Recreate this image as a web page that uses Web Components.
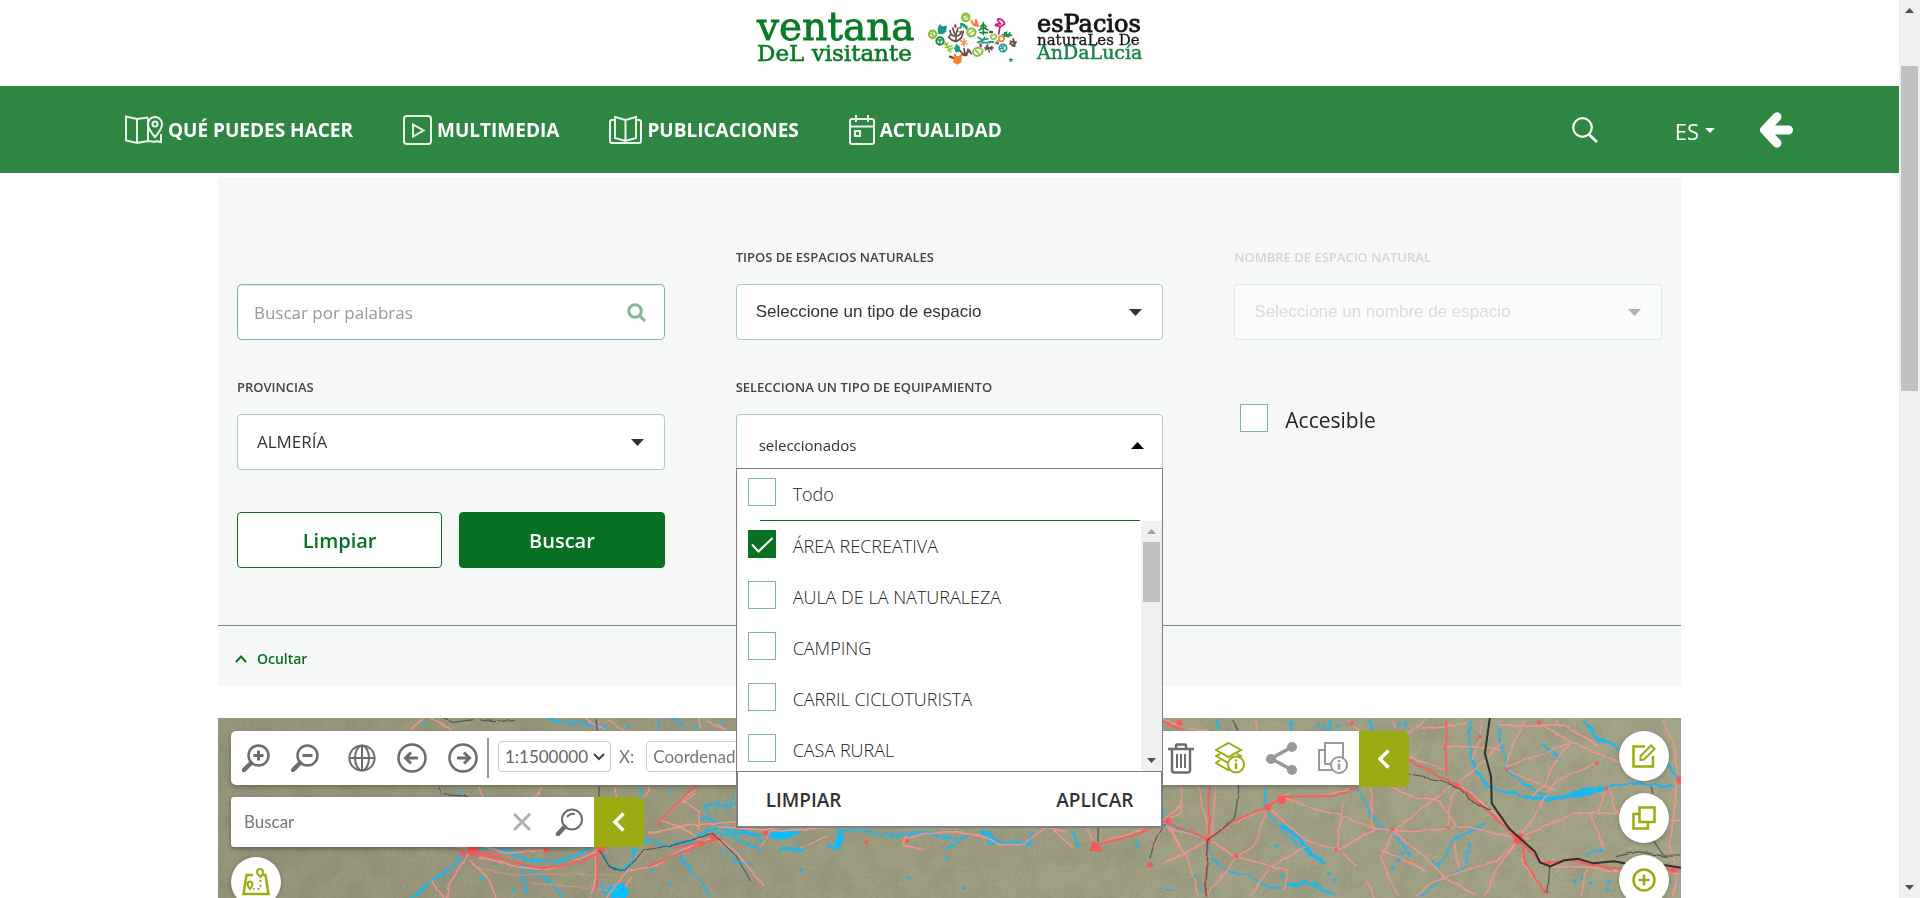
<!DOCTYPE html>
<html lang="es">
<head>
<meta charset="utf-8">
<title>Ventana del Visitante</title>
<style>
  html, body { height: 100%; }
  body { margin: 0; background: #fff; color: #333; font-family: "Open Sans", "Noto Sans", sans-serif; overflow: hidden; }
</style>
</head>
<body>
<page-shell>
  <site-logo></site-logo>
  <site-nav></site-nav>
  <search-panel></search-panel>
  <map-view></map-view>
</page-shell>

<script>
const define = (name, html, setup) => {
  const tpl = document.createElement('template');
  tpl.innerHTML = '<style>*{box-sizing:border-box}[hidden]{display:none}</style>' + html;
  customElements.define(name, class extends HTMLElement {
    connectedCallback() {
      if (this.shadowRoot) return;
      const root = this.attachShadow({ mode: 'open' });
      root.append(tpl.content.cloneNode(true));
      if (setup) setup(root, this);
    }
  });
};

/* Vertical scroll track, with a thumb placed by the --start and --size properties */
define('scroll-track', `
<style>
  :host { display: flex; flex-direction: column; align-items: center; width: 21px; background: #f0f0f0; flex: none; }
  svg { display: block; flex: none; width: 9px; height: 5px; margin: 8px 0; fill: #505050; }
  :host([at-start]) .up { fill: #a3a3a3; }
  .rail { flex: 1; width: 17px; display: flex; flex-direction: column; }
  .before { flex: none; height: var(--start, 0%); }
  .thumb { flex: none; height: var(--size, 30%); background: #c1c1c1; }
</style>
<svg class="up" viewBox="0 0 9 5"><path d="M4.500 0 9 5H0z"/></svg>
<div class="rail"><div class="before"></div><div class="thumb"></div></div>
<svg viewBox="0 0 9 5"><path d="M0 0h9L4.500 5z"/></svg>`);

define('page-shell', `
<style>
  :host { display: flex; height: 100vh; }
  main { flex: 1; min-width: 0; display: flex; flex-direction: column; overflow: hidden; }
  scroll-track { --start: 45px; --size: 38%; }
</style>
<main><slot></slot></main>
<scroll-track></scroll-track>`);

define('site-logo', `
<style>
  :host { display: flex; justify-content: center; height: 86px; flex: none; }
  a { display: block; }
  svg { display: block; font-family: "DejaVu Serif", serif; }
</style>
<a href="#" aria-label="Ventana del Visitante">
<svg width="388" height="70" viewBox="756 0 388 70">
  <g fill="#0b7a26" stroke="#0b7a26">
    <text x="757" y="40" font-size="39" stroke-width=".8">ventana</text>
    <text x="757" y="61" font-size="23" stroke-width=".6">DeL visitante</text>
  </g>
  <text x="1037" y="32" font-size="24" fill="#151515" stroke="#151515" stroke-width=".9">esPacios</text>
  <text x="1037" y="45" font-size="15" fill="#151515" stroke="#151515" stroke-width=".3">naturaLes De</text>
  <text x="1037" y="59" font-size="19" fill="#168244" stroke="#168244" stroke-width=".4">AnDaLucía</text>
  <g transform="translate(900 0) scale(.33333)" fill="none" stroke-width="7" stroke-linecap="round" stroke-linejoin="round">
    <g stroke="#8cc63f">
      <circle cx="98" cy="103" r="11"/><path d="M90 100l16 8M98 92v22" stroke-width="4"/>
      <circle cx="197" cy="52" r="11"/><path d="M190 48q7-6 12 2q-6 6-10 4" stroke-width="4"/>
      <circle cx="214" cy="97" r="12"/><path d="M206 103l18-14" stroke-width="4"/>
      <path d="M244 146q-20-8-26 10q6 16 20 10q10-6 10-16M228 152l8 8" stroke-width="6"/>
      <path d="M136 128l16 28M136 142l20-4M144 152l14-8M132 134l12-4" stroke-width="5"/>
      <path d="M272 108q10-10 18 0q-2 14-16 8z" stroke-width="5"/>
      <path d="M190 82q6-10 12-2M170 94l14 2" stroke-width="5"/>
      <path d="M286 130l8-8M232 128h10" stroke-width="5"/>
    </g>
    <g stroke="#159a8b">
      <path d="M116 84l4-8 6 6 12-2-2 14q-8 10-20 4z" fill="#159a8b" stroke-width="5"/>
      <path d="M182 72l10 2 8 12M180 84l8-12" stroke-width="6"/>
      <path d="M234 126l14-4 6-10M234 112l14 8 16-4M246 128l22 0" stroke-width="5"/>
      <path d="M170 134l8 6 0 14-10 2-4-10z" fill="#159a8b" stroke-width="3"/>
      <circle cx="309" cy="144" r="11" stroke-width="5"/><path d="M302 146l12-8M304 138l8 14" stroke-width="4"/>
      <path d="M332 175v9M328 179h10M330 184l5-3" stroke-width="4"/>
      <path d="M268 126h12" stroke-width="6"/>
    </g>
    <g stroke="#198a43">
      <circle cx="120" cy="123" r="11" stroke-width="6"/><path d="M114 120h12M118 130l4-12" stroke-width="4"/>
      <path d="M250 68v36M242 80l8-8 8 8M238 90l12-8 14 8M240 98h22" stroke-width="5"/>
      <path d="M314 98l8 12M308 104h16l10 2M320 96l-8 16M330 98l-4 12" stroke-width="5"/>
    </g>
    <g stroke="#6a4a48">
      <path d="M150 92q2 16 14 16q16 2 20-14M158 84l6 18M174 84l-6 18M168 104v20M152 104l-6 8q8 10 20 12M190 94l-6 20-14 10" stroke-width="5"/>
      <path d="M180 152l12 14M192 146l4 20M204 148l-4 18M186 164l20-8M208 150l6 12" stroke-width="5"/>
      <path d="M332 124l12 4M330 130l10 8 8-12M340 118l4 20" stroke-width="6"/>
      <path d="M258 138l18 12M256 150l20-10M262 134l6 22M254 144h26" stroke-width="4"/>
      <path d="M150 170l10 4M270 96h6" stroke-width="7"/>
    </g>
    <g stroke="#f58233">
      <path d="M164 162l4 8h10l6-6-2 22-10 6-10-6z" fill="#f58233" stroke-width="4"/>
      <path d="M214 62l6 12 14 4-6-18-2 12" stroke-width="6"/>
      <path d="M192 116v22M182 122l20 10M184 134l16-12" stroke-width="4"/>
      <circle cx="304" cy="116" r="8" stroke-width="5"/>
    </g>
    <g stroke="#d8127d">
      <path d="M302 58q-6-4-10 2l10 12q-14-2-16 4l16 4 12-8q-4-12-12-14M300 80l-4 22" stroke-width="5"/>
      <path d="M166 76v4M242 134v4M292 130h2" stroke-width="7"/>
    </g>
  </g>
</svg>
</a>`);

define('nav-item', `
<style>
  :host { display: block; }
  a { display: flex; align-items: center; gap: 5px; color: #fff; text-decoration: none; font-size: 19px; line-height: 28px; font-weight: 700; white-space: nowrap; }
  ::slotted(svg) { display: block; fill: none; stroke: #fff; stroke-width: 2; opacity: .9; }
</style>
<a href="#"><slot name="icon"></slot><slot></slot></a>`);

define('site-nav', `
<style>
  :host { display: block; background: #2d8742; flex: none; color: #fff; }
  nav { display: flex; align-items: center; height: 87px; padding: 0 106px 0 125px; gap: 50px; }
  .right { margin-left: auto; display: flex; align-items: center; }
  button { background: none; border: 0; padding: 0; color: inherit; font: inherit; display: flex; align-items: center; }
  .lang { font-size: 22px; line-height: 30px; gap: 6px; margin: 2px 44px 0 77px; }
  svg { display: block; }
</style>
<nav aria-label="Principal">
  <nav-item><svg slot="icon" width="38" height="30" viewBox="0 0 38 30"><path d="M30.500 26 36 27V19M23 2.500l-11 1.500L1 1.500v24L12 28l11-2 8 1M12 4v24M23 3v23M30 22q-7-8-7-13a7 7 0 0 1 14 0q0 5-7 13z"/><circle cx="30" cy="9" r="2.500"/></svg>QUÉ PUEDES HACER</nav-item>
  <nav-item><svg slot="icon" width="29" height="30" viewBox="0 0 29 30"><rect x="1" y="1" width="27" height="28" rx="3"/><path d="M10 9.500v12l10.500-6z"/></svg>MULTIMEDIA</nav-item>
  <nav-item><svg slot="icon" width="33" height="30" viewBox="0 0 33 30"><path d="M6 5H3q-2 0-2 2v19q0 2 2 2h27q2 0 2-2V7q0-2-2-2h-3M6 2l10.500 3v21L6 23zM27 2l-10.500 3v21L27 23zM16.500 26v2"/></svg>PUBLICACIONES</nav-item>
  <nav-item><svg slot="icon" width="26" height="32" viewBox="0 0 26 32"><rect x="1" y="5" width="24" height="25" rx="2"/><path d="M1 12.500h24M7 1v7M19 1v7"/><rect x="6" y="17" width="5" height="5"/></svg>ACTUALIDAD</nav-item>
  <div class="right">
    <button aria-label="Buscar"><svg width="26" height="26" viewBox="0 0 26 26" fill="none" stroke="#fff" stroke-width="2.200"><circle cx="10.500" cy="10.500" r="9.300"/><path d="m17 17.500 8 7.500" stroke-width="2.800"/></svg></button>
    <button class="lang">ES<svg width="10" height="5" viewBox="0 0 10 5" fill="#fff"><path d="M0 0h10L5 5z"/></svg></button>
    <button aria-label="Volver"><svg width="34" height="36" viewBox="0 0 34 36" fill="none" stroke="#fff" stroke-width="9" stroke-linecap="round" stroke-linejoin="round"><path d="M18 4.800 5.500 18 18 31.200M8 18h21.500"/></svg></button>
  </div>
</nav>`);

define('select-field', `
<style>
  :host { display: block; }
  label { display: flex; flex-direction: column; gap: 18px; }
  .name { font-size: 13px; line-height: 18px; font-weight: 600; color: #444; white-space: nowrap; }
  .box { display: grid; align-items: center; }
  select, svg { grid-area: 1 / 1; }
  select { appearance: none; width: 100%; height: 56px; margin: 0; padding: 0 50px 0 19px; border: 1px solid #a9cdb8; border-radius: 4px; background: #fff; color: #333; font: 400 17px/24px "Liberation Sans", sans-serif; opacity: 1; }
  :host([light]) select { font: 400 17px/24px "Open Sans", sans-serif; }
  svg { justify-self: end; margin-right: 21px; width: 13px; height: 7px; fill: #333; pointer-events: none; }
  :host([off]) .name { color: #d3d5d4; }
  :host([off]) select { color: #d9dbda; background: #fafcfb; border-color: #dbe8e2; }
  :host([off]) svg { fill: #b3b3b3; }
</style>
<label><span class="name"></span><span class="box"><select><option></option></select><svg viewBox="0 0 13 7"><path d="M0 0h13L6.500 7z"/></svg></span></label>`,
(root, host) => {
  root.querySelector('.name').textContent = host.getAttribute('label');
  root.querySelector('option').textContent = host.getAttribute('value');
  root.querySelector('select').disabled = host.hasAttribute('off');
});

define('check-item', `
<style>
  :host { display: block; }
  label { display: flex; align-items: flex-start; gap: 17px; }
  .box { display: grid; flex: none; }
  input, svg { grid-area: 1 / 1; }
  input { appearance: none; margin: 0; width: 28px; height: 28px; border: 1px solid #80b792; background: #fff; }
  input:checked { background: #087021; border-color: #087021; }
  svg { display: none; width: 28px; height: 28px; fill: none; stroke: #fff; stroke-width: 2; pointer-events: none; }
  input:checked + svg { display: block; }
  .text { font-size: var(--text, 18px); line-height: 26px; padding-top: 3px; font-weight: var(--weight, 300); color: #222; white-space: nowrap; }
</style>
<label><span class="box"><input type="checkbox"><svg viewBox="0 0 28 28"><path d="M4 14.500 10.500 21.500 24.500 8"/></svg></span><span class="text"><slot></slot></span></label>`,
(root, host) => { root.querySelector('input').checked = host.hasAttribute('checked'); });

define('multi-select', `
<style>
  :host { display: block; position: relative; z-index: 5; }
  .name { font-size: 13px; line-height: 18px; font-weight: 600; color: #444; white-space: nowrap; margin-bottom: 18px; }
  .trigger { display: flex; align-items: center; justify-content: space-between; width: 100%; height: 56px; padding: 6px 18px 0 22px; border: 1px solid #a9cdb8; border-radius: 4px; background: #fff; color: #333; font: 400 15px/24px "Open Sans", sans-serif; }
  .trigger svg { width: 13px; height: 7px; fill: #000; }
  .menu { position: absolute; top: 90px; left: 0; right: 0; background: #fff; border: 1px solid #808080; }
  .all { padding: 9px 11px 13px; }
  .line { height: 1px; background: #087021; margin: 0 22px 0 23px; }
  .list { display: flex; height: 250px; }
  .items { flex: 1; overflow: hidden; padding: 9px 11px 0; display: flex; flex-direction: column; gap: 21px; }
  .items check-item { height: 30px; flex: none; }
  scroll-track { --size: 29%; }
  .foot { display: flex; justify-content: space-between; border: 1px solid #808080; padding: 15px 28px 13px; }
  .foot button { background: none; border: 0; padding: 0; font: 600 19px/26px "Open Sans", sans-serif; color: #333; }
</style>
<div class="name" id="n">SELECCIONA UN TIPO DE EQUIPAMIENTO</div>
<button class="trigger" aria-expanded="true" aria-describedby="n">seleccionados<svg viewBox="0 0 13 7"><path d="M0 7h13L6.500 0z"/></svg></button>
<div class="menu">
  <div class="all"><check-item>Todo</check-item></div>
  <div class="line"></div>
  <div class="list">
    <div class="items">
      <check-item checked>ÁREA RECREATIVA</check-item>
      <check-item>AULA DE LA NATURALEZA</check-item>
      <check-item>CAMPING</check-item>
      <check-item>CARRIL CICLOTURISTA</check-item>
      <check-item>CASA RURAL</check-item>
    </div>
    <scroll-track at-start></scroll-track>
  </div>
  <div class="foot"><button>LIMPIAR</button><button>APLICAR</button></div>
</div>`);

define('search-panel', `
<style>
  :host { display: block; width: 77.050%; margin: 4px auto 0; background: #f6f8f7; flex: none; position: relative; z-index: 5; }
  form { display: grid; grid-template-columns: repeat(3, minmax(0, 1fr)); column-gap: 71px; row-gap: 38px; padding: 71px 19px 57px; }
  .words { align-self: end; display: grid; align-items: center; }
  .words input, .words svg { grid-area: 1 / 1; }
  .words input { width: 100%; height: 56px; border: 1px solid #80b792; border-radius: 5px; padding: 0 50px 0 16px; font: 400 17px/24px "Open Sans", sans-serif; background: #fff; box-shadow: inset 0 1px 1px #e9e9e9; }
  .words input::placeholder { color: #999; opacity: 1; }
  .words svg { justify-self: end; margin-right: 19px; }
  .acc { padding: 26px 0 0 6px; --text: 21px; --weight: 400; }
  .actions { display: grid; grid-template-columns: 1fr 1fr; gap: 17px; margin-top: 4px; }
  .actions button { height: 56px; border: 1px solid #087021; border-radius: 4px; font: 600 20px/28px "Open Sans", sans-serif; background: #fff; color: #087021; padding: 2px 0 0; }
  .actions .go { background: #087021; color: #fff; }
  .hide { border-top: 1px solid #7e8890; height: 61px; padding: 0 17px; display: flex; align-items: center; }
  .hide button { background: none; border: 0; padding: 5px 0 0; display: flex; align-items: center; gap: 10px; font: 600 14px/20px "Open Sans", sans-serif; color: #087021; }
</style>
<form onsubmit="return false">
  <div class="words"><input type="text" placeholder="Buscar por palabras" aria-label="Buscar por palabras"><svg width="19" height="19" viewBox="0 0 19 19" fill="none" stroke="#80b792" stroke-width="3"><circle cx="8" cy="8" r="6.300"/><path d="m12.500 12.500 5.500 5.500"/></svg></div>
  <select-field label="TIPOS DE ESPACIOS NATURALES" value="Seleccione un tipo de espacio"></select-field>
  <select-field off label="NOMBRE DE ESPACIO NATURAL" value="Seleccione un nombre de espacio"></select-field>
  <select-field light label="PROVINCIAS" value="ALMERÍA"></select-field>
  <multi-select></multi-select>
  <check-item class="acc">Accesible</check-item>
  <div class="actions"><button type="button">Limpiar</button><button type="button" class="go">Buscar</button></div>
</form>
<div class="hide"><button><svg width="12" height="8" viewBox="0 0 12 8" fill="none" stroke="#087021" stroke-width="2"><path d="m1 7 5-5.500L11 7"/></svg>Ocultar</button></div>`);

define('map-canvas', `
<style>
  :host { display: block; overflow: hidden; background: #97967b; }
  svg { display: block; width: 100%; min-height: 100%; }
  path, circle { vector-effect: non-scaling-stroke; }
</style>
<svg viewBox="0 0 1463 180" preserveAspectRatio="xMinYMin slice" aria-hidden="true">
  <defs>
    <linearGradient id="land"><stop offset="0" stop-color="#98967b"/><stop offset=".5" stop-color="#a0a085"/><stop offset="1" stop-color="#a6a68b"/></linearGradient>
    <filter id="relief" x="0" y="0" width="100%" height="100%"><feTurbulence type="fractalNoise" baseFrequency=".3" numOctaves="3" seed="4" result="n"/><feDiffuseLighting in="n" surfaceScale="1.300" lighting-color="#fff"><feDistantLight azimuth="225" elevation="60"/></feDiffuseLighting></filter>
    <filter id="hills" x="0" y="0" width="100%" height="100%"><feTurbulence type="fractalNoise" baseFrequency=".04" numOctaves="3" seed="9"/><feColorMatrix values="0 0 0 0 0 0 0 0 0 0 0 0 0 0 0 1.500 0 0 0 -.550"/></filter>
    <filter id="rough"><feTurbulence type="fractalNoise" baseFrequency=".12" numOctaves="2" seed="3"/><feDisplacementMap in="SourceGraphic" scale="6" xChannelSelector="R" yChannelSelector="G"/></filter>
    <filter id="slight"><feTurbulence type="fractalNoise" baseFrequency=".06" numOctaves="2" seed="7"/><feDisplacementMap in="SourceGraphic" scale="4" xChannelSelector="R" yChannelSelector="G"/></filter>
  </defs>
  <rect width="1463" height="180" fill="url(#land)"/>
  <rect width="1463" height="180" filter="url(#relief)" style="mix-blend-mode:multiply" opacity=".2"/>
  <rect width="1463" height="180" filter="url(#hills)" opacity=".07"/>

  <g fill="none" stroke="#17b8f2" stroke-width="1.500" stroke-linejoin="round" filter="url(#rough)">
    <g transform="translate(-8 -118) scale(.34435 .33333)">
      <path d="M975 355l60 15 80 5 40 10M1300 355l5 35M1345 355l35 30M1480 365l20 25" stroke-width="2"/>
      <path d="M585 894l65-55 50-35 40-45 60-15 60 5 50 30 100 5 60-20 30-20 20-10" stroke-width="2.200"/>
      <path d="M1130 745l30 50 40 15 25-25 10-50 40-15 50 20 30-10 40 0 20-25 60-20 50 15 80 5" stroke-width="2.200"/>
      <path d="M905 795l10 45 5 50M915 800l80 50 25 40M1360 750l30 60 50 50 10 34M1480 750l60 40 30 5M1455 660l-20-40 40-15 30 20 60-50M1245 560l5 30M1340 560l-5 20"/>
      <path d="M1150 894l-15-50M1160 860l40 10" stroke-width="3"/>
      <path d="M1155 860l40-8 20 22-10 20h-40z" fill="#00c0ff"/>
      <path d="M730 560l-5 20M1420 670l10-20 60 20"/>
    </g>
    <g transform="translate(502 -168) scale(.33333)">
      <path d="M-20 780l50-20 10-30M-10 830l60 10 60 15 20 30M-10 850l40 5 40 20 50 25" stroke-width="1.800"/>
      <path d="M140 855l60-15 40 5-30 15-50 5zM345 895l10-45 10 5-5 40zM180 895l70 5M320 890l40 5" fill="#00c0ff" stroke-width="3"/>
      <path d="M360 845l60-5 60 15 80 0 60-10 60 20 60-5M680 895l40-20M790 850l20 30 60-5 60 10M940 845l-10 30-20 10M1060 845l15 50M1250 870v25" stroke-width="2"/>
      <path d="M780 840l40 20M800 865l40 10" stroke-width="3"/>
    </g>
    <g transform="translate(932 -18) scale(.34435 .33333)">
      <path d="M190 55l10 30M410 60v30M525 60l-5 30M640 60l5 30M930 60l-5 70 15 70 40 60 70 20 60 15 70 0 70-20 70-15 90-10 110 10" stroke-width="2.200"/>
      <path d="M1010 80l15 80 20 60 60 45 50 25M745 60v30M1260 60l30 50 40 15 60 40M1140 130l50 50M1480 160l50 70" stroke-width="2"/>
      <path d="M1270 70l30 50 35 5" stroke-width="3"/>
      <path d="M335 260v70l40 50 60 60 70 55M600 260l40 80 40 45 25 10 50 70M170 420l10 60 50 35 60 10 60 40 100-20 80 40M360 560l120-10 60 40M40 370l60 20 50 30M730 420l-20-30M970 370l-50 30-40 20-40 80-60-40M930 430l-15 70-70 40-60 50"/>
      <path d="M380 375l30 20 60 65 40 30" stroke-width="3"/>
      <path d="M1190 295l100-20 40-10M1090 290l90 10" stroke-width="3"/>
      <path d="M40 320l-5 40M1270 460l50-10M30 565l40 5"/>
    </g>
  </g>
  <path d="M478 8h1M205 6h1M410 8h1M260 27h1M322 27h1M434 151h1M452 165h1M470 148h1M264 160h1M295 172h1M745 170h1M728 140h1M1173 137h1M1180 142h1M1184 135h1M1058 128h1M1064 158h1M1110 156h1M1116 162h1M1356 163h1M1364 160h1M1372 165h1M1389 172h1M1390 164h1M976 158h1M982 172h1M1174 150h1M1266 113h1M1099 7h1M1106 10h1M1119 8h1M1181 6h1M690 160h1M583 152h1" stroke="#17b8f2" stroke-width="3" stroke-linecap="round" fill="none"/>

  <g fill="none" stroke="#f59490" stroke-width="1.500" filter="url(#slight)">
    <g transform="translate(-8 -118) scale(.34435 .33333)">
      <path d="M585 390l30-35M640 355l60 35M1090 355l60 35M1160 360l40 30M1420 355v35M1440 365l60 25M780 560l15 40 60 10 90-20 20-30M1180 560v30M1260 590l20-30"/>
      <path d="M755 760l-60 90-5 44M755 780l50 50 25 64M640 840l40 54M780 770l110 30 80 10 80-20 90-45M1120 750v80l-15 64M1150 894l60-80 80-15 60-40 70-30 50-20 60 50 80 100M1225 830l-20 30M1270 700l130-25 130-10M1305 660l60 20 60 40M1300 670l70-70 40-30M1370 600l50 40v50M1410 580l-40 30M755 745l-50-5M800 740l60 20 120-10"/>
      <path d="M760 790q60 40 200 35t220 0M930 850l260 20" opacity=".45"/>
    </g>
    <g transform="translate(502 -168) scale(.33333)">
      <path d="M-10 830l140 10 60-10M240 895l80-35M120 895l30-50 200-15M560 855l-10 30 60 15M560 860l120-15 100 10 60 30 70-5M910 880l70-50 60 20M1000 840l60 55M1140 880l120-40 70-30 50-40M1300 895l30-75M1130 895l-30-60M-10 520l30 20M1340 510l40 20M1350 830l30 60M-10 870l40 25"/>
    </g>
    <g transform="translate(932 -18) scale(.34435 .33333)">
      <path d="M40 60l60 30M110 90h60M310 60v30M570 60l40 30M705 60l10 30M750 100l50-40M860 60v165M750 170l110 40M920 70l-130 15M1010 75l190 0 100 60M960 60l-5 60-20 60M1090 60l-40 80-15 60M1130 70l100 60 140 60M1035 210l90 40 50 20M1180 60l10 20M1300 190l-120 50-40 60-30 60-40 50M1220 130l-50 60-20 60-40 40M1035 200l110-40 70-30M1490 60l30 80 10 90M895 250l80-70 50-60M890 255l60 40 45 40 70 70M860 140l70 0 90 10"/>
      <path d="M140 260l30 150M90 260v80l-40 20M190 260l-10 140M400 290l120-5 60-20M340 320l60-40M340 330l-40 110-50 30M340 320l-170 90M340 320l110 100 90 25M380 290l80 30 80 20 100 45 120 10 160-15 130 30 55 5M640 260l5 130M560 310l-20 140M710 390l160-130M710 390l-40 80 50 120M540 450l110-60M705 390l80 70 80 80 80 45M700 260l60 30 80 10 50 80M865 380l10-90 20-30M670 450l130 60M450 440l-100 60-60 90M250 470l-80-50-120-40M250 470l150 40 -10 60M250 470l-90 120M50 380l60 100 30 110M170 420l-70 40-60 30M1070 420l-60 60-120 40-60 20-60 50M1070 420l-60 80-40 90M1080 410l150-70 130 0 180 20M1100 450l60 50 110 0 120 20 150 0M1090 440l-10 50 70 90M1280 340l40 110M1325 260l-25 80M1330 260l20 60 30 50M1270 500l-20 90M1530 240l-20 200 20 90-10 60M1400 540l-60-40M560 460l40 40M630 545l20 50M880 420l20 90"/>
    </g>
  </g>
  <g fill="none" stroke="#f2605f" stroke-width="2" stroke-linejoin="round" filter="url(#slight)">
    <path transform="translate(-8 -118) scale(.34435 .33333)" d="M765 760l110 25 90 20 120-20 55-35M1125 750v120M1300 670l90-95 30-30M1340 745l150-30M1270 800l90-40 110-45M750 755l90 10"/>
    <path transform="translate(932 -18) scale(.34435 .33333)" d="M860 60v165M750 180l130 70 100 80 85 85M40 65l60 25M170 415l60-40 60-35 50-20 45-30 150-3 70-25M170 260v150l-10 180M1080 430l60 60 80-10 60 15 120 15M1085 440l5 50 60 90M40 365l60 20 70 35M1410 495l130 15"/>
    <path transform="translate(502 -168) scale(.33333)" d="M1130 885l130-35 70-35"/>
  </g>
  <g fill="#fb5557" transform="translate(-8 -118)">
    <circle cx="262" cy="251" r="5"/><circle cx="268" cy="247" r="3"/><circle cx="391" cy="249" r="4"/><circle cx="503" cy="238" r="3"/><circle cx="336" cy="250" r="2.500"/><circle cx="491" cy="243" r="2.500"/><circle cx="253" cy="253" r="3"/>
  </g>
  <g fill="#fb5557" transform="translate(932 -18) scale(.34435 .33333)">
    <circle cx="382" cy="300" r="12"/><circle cx="342" cy="322" r="10"/><circle cx="168" cy="422" r="9"/><circle cx="250" cy="468" r="7"/><circle cx="890" cy="257" r="9"/><circle cx="1068" cy="420" r="13"/><circle cx="1076" cy="408" r="8"/><circle cx="1297" cy="190" r="6"/><circle cx="1130" cy="68" r="6"/><circle cx="958" cy="110" r="6"/><circle cx="1325" cy="266" r="6"/><circle cx="703" cy="388" r="6"/><circle cx="866" cy="384" r="5"/><circle cx="540" cy="448" r="5"/><circle cx="1146" cy="574" r="6"/><circle cx="1520" cy="508" r="9"/><circle cx="1538" cy="240" r="10"/><circle cx="85" cy="68" r="9"/><circle cx="52" cy="362" r="9"/><circle cx="585" cy="70" r="6"/><circle cx="1035" cy="210" r="5"/><circle cx="1155" cy="490" r="6"/><circle cx="0" cy="495" r="8"/>
  </g>
  <g fill="#fb5557"><path d="M875 122l6 5 3 6h-13z"/><circle cx="548" cy="115" r="2.500"/><circle cx="689" cy="123" r="2"/><circle cx="648" cy="124" r="2"/></g>
  <g fill="none" stroke="#55544d" stroke-width="1.200" filter="url(#slight)">
    <path transform="translate(-8 -118) scale(.34435 .33333)" d="M1120 355l5 35M675 355l30 12 60-8M785 360l40 5 60-3M665 560l10 20 60 5 20 12M1130 560v35M1130 750l30 50 40 15 25-25 40-40 80-15 85-25 30-10 60 60 50 80"/>
    <path transform="translate(932 -18) scale(.34435 .33333)" d="M240 60l15 30M260 255l-15 100-75 65-10 170M750 225l90 15 50 20 40 40 60 30M1160 500l-5 80M1350 470l70-15 80 15M40 375l-30 60-10 40M1455 260l5 20M1460 420l30 45 50 0"/>
    <path d="M880 110v14"/>
  </g>
  <path transform="translate(932 -18) scale(.34435 .33333)" d="M987 50l-15 110 18 70 2 80 50 75 75 70 15 32 30 12 40-18 40-5 45 14 60-6 60 12 90 0 50 8" fill="none" stroke="#32312d" stroke-width="2" filter="url(#slight)"/>
</svg>`);

define('round-button', `
<style>
  :host { display: block; }
  button { width: 50px; height: 50px; border: 0; padding: 0; border-radius: 50%; background: #fff; display: grid; place-items: center; box-shadow: 0 1px 4px #0004; }
  ::slotted(svg) { fill: none; stroke: #9bab11; stroke-width: 2.500; }
</style>
<button><slot></slot></button>`,
(root, host) => root.querySelector('button').setAttribute('aria-label', host.getAttribute('label')));

define('map-view', `
<style>
  :host { display: grid; width: 77.050%; margin: 32px auto 0; flex: 1; min-height: 0; overflow: hidden; font-family: Lato, sans-serif; }
  map-canvas, .over { grid-area: 1 / 1; min-height: 0; }
  .over { position: relative; display: flex; justify-content: space-between; align-items: flex-start; padding: 13px 12px 0 13px; }
  .left { flex: none; width: 81.900%; display: flex; flex-direction: column; align-items: flex-start; gap: 10px; }
  .right { display: flex; flex-direction: column; gap: 12px; }
  .bar, .find { display: flex; align-items: flex-start; }
  .bar { width: 100%; }
  .tools { flex: 1; min-width: 0; height: 54px; display: flex; align-items: center; background: #fff; border-radius: 5px 0 0 5px; padding: 0 11px; box-shadow: 0 2px 4px #0004; }
  button { border: 0; background: none; padding: 0; display: grid; place-items: center; color: inherit; }
  svg { display: block; fill: none; }
  .fold { width: 50px; height: 56px; background: #9bab11; border-radius: 0 6px 6px 0; flex: none; }
  .nav { display: flex; align-items: center; gap: 21px; color: #6c6c6c; }
  .nav .globe { margin-left: 8px; }
  .sep { width: 2px; height: 40px; background: #999; margin: 0 9px; }
  .scale { display: grid; align-items: center; }
  .scale select, .scale svg { grid-area: 1 / 1; }
  .scale svg { justify-self: end; margin-right: 6px; pointer-events: none; }
  .scale, .coord { padding-bottom: 3px; }
  select, .tools input { appearance: none; height: 31px; border: 1px solid #ccc; border-radius: 4px; background: #fff; color: #666; font: 400 17px/22px Lato, sans-serif; padding: 0 6px; margin: 0; }
  select { width: 113px; }
  .coord { display: flex; align-items: center; gap: 12px; margin-left: 8px; font-size: 17px; line-height: 22px; color: #777; }
  .coord input { width: 130px; }
  input::placeholder { color: #777; opacity: 1; }
  .extra { margin-left: auto; display: flex; align-items: center; gap: 21px; }
  .find .box { display: flex; align-items: center; height: 50px; width: 363px; padding: 0 11px 0 13px; background: #fff; border-radius: 3px 0 0 3px; box-shadow: 0 2px 4px #0005; }
  .find input { flex: 1; min-width: 0; border: 0; padding: 0; background: none; font: 400 17px/22px Lato, sans-serif; }
  .find .go { margin-left: 24px; }
  .find .fold { height: 50px; }
</style>
<map-canvas></map-canvas>
<div class="over">
  <div class="left">
    <div class="bar">
      <div class="tools">
        <div class="nav">
          <button aria-label="Acercar"><svg width="28" height="28" viewBox="0 0 28 28" stroke="currentColor" stroke-width="2.500"><circle cx="16.500" cy="11.500" r="10"/><path d="m9 19-7 7" stroke-width="4.500" stroke-linecap="round"/><path d="M16.500 6.500v10M11.500 11.500h10" stroke-width="3"/></svg></button>
          <button aria-label="Alejar"><svg width="28" height="28" viewBox="0 0 28 28" stroke="currentColor" stroke-width="2.500"><circle cx="16.500" cy="11.500" r="10"/><path d="m9 19-7 7" stroke-width="4.500" stroke-linecap="round"/><path d="M11.500 11.500h10" stroke-width="3"/></svg></button>
          <button class="globe" aria-label="Vista completa"><svg width="28" height="28" viewBox="0 0 28 28" stroke="currentColor" stroke-width="2"><circle cx="14" cy="14" r="12.600"/><path d="M14 2v24M1 14h26"/><ellipse cx="14" cy="14" rx="7" ry="12.300"/></svg></button>
          <button aria-label="Anterior"><svg width="30" height="30" viewBox="0 0 30 30" stroke="currentColor" stroke-width="2.500"><circle cx="15" cy="15" r="13.500"/><path d="M21 15H9.500M14 9.500 8.500 15l5.500 5.500" stroke-width="3"/></svg></button>
          <button aria-label="Siguiente"><svg width="30" height="30" viewBox="0 0 30 30" stroke="currentColor" stroke-width="2.500"><circle cx="15" cy="15" r="13.500"/><path d="M9 15h11.500M16 9.500l5.500 5.500-5.500 5.500" stroke-width="3"/></svg></button>
        </div>
        <div class="sep"></div>
        <div class="scale"><select aria-label="Escala"><option>1:1500000</option></select><svg width="12" height="8" viewBox="0 0 12 8" stroke="#444" stroke-width="2"><path d="m1 1 5 5 5-5"/></svg></div>
        <label class="coord">X:<input type="text" placeholder="Coordenada X"></label>
        <div class="extra">
          <button aria-label="Borrar"><svg width="26" height="31" viewBox="0 0 26 31" stroke="#6c6c6c" stroke-width="2.500"><path d="M0 6h26M8 6V2.500q0-1 1-1h8q1 0 1 1V6M4 6v21q0 2.500 2.500 2.500h13q2.500 0 2.500-2.500V6"/><path d="M9 11v14M13 11v14M17 11v14" stroke-width="2"/></svg></button>
          <button aria-label="Capas"><svg width="30" height="32" viewBox="0 0 30 32" stroke="#9bab11" stroke-width="2"><path d="M13.500 1 26 8l-12.500 7L1 8zM5 12l-4 2 12.500 7 3-2M5 18l-4 3 12.500 7 2-1M22 12l4 2-3 2"/><circle cx="21" cy="22.500" r="8" fill="#fff"/><path d="M21 21v6" stroke-width="2.500"/><path d="M21 17.500v2" stroke-width="2.500"/></svg></button>
          <button aria-label="Compartir"><svg width="31" height="33" viewBox="0 0 31 33" fill="#999" stroke="#999" stroke-width="2"><path d="M26 5 5 16.500 26 28" fill="none" stroke-width="3.500"/><circle cx="26" cy="5" r="4" fill="#999"/><circle cx="5" cy="17" r="4" fill="#999"/><circle cx="26" cy="28" r="4" fill="#999"/></svg></button>
          <button aria-label="Información"><svg width="30" height="33" viewBox="0 0 30 33" stroke="#999" stroke-width="2"><path d="M7 8H1v20h14v-5"/><path d="M7 1h18v21H7z" fill="#fff"/><circle cx="21" cy="23" r="8" fill="#fff"/><path d="M21 21.500v6M21 18v2" stroke-width="2.500"/></svg></button>
        </div>
      </div>
      <button class="fold" aria-label="Plegar herramientas"><svg width="12" height="20" viewBox="0 0 12 20" stroke="#fff" stroke-width="3.500"><path d="m10.500 1.500-8.500 8.500 8.500 8.500"/></svg></button>
    </div>
    <div class="find">
      <div class="box">
        <input type="text" placeholder="Buscar" aria-label="Buscar">
        <button aria-label="Limpiar búsqueda"><svg width="18" height="18" viewBox="0 0 18 18" stroke="#b0b0b0" stroke-width="3"><path d="m1 1 16 16M17 1 1 17"/></svg></button>
        <button class="go" aria-label="Buscar lugar"><svg width="28" height="28" viewBox="0 0 28 28" stroke="#6c6c6c" stroke-width="2"><circle cx="17" cy="11.500" r="10"/><path d="m9.500 19-6.500 7" stroke-width="4.500" stroke-linecap="round"/><path d="M12 9q3-4 8-3"/></svg></button>
      </div>
      <button class="fold" aria-label="Plegar buscador"><svg width="12" height="20" viewBox="0 0 12 20" stroke="#fff" stroke-width="3.500"><path d="m10.500 1.500-8.500 8.500 8.500 8.500"/></svg></button>
    </div>
    <round-button label="Mapa"><svg width="28" height="28" viewBox="0 0 28 28"><path d="M11 7H4.500L1.500 26h25L23.500 7H21"/><path d="M18.500 9q-3.500-3-3.500-5a3 3 0 0 1 6 0q0 2-2.500 5zM8 21q-2.500-3-2.500-5a2.500 2.500 0 0 1 5 0q0 2-2.500 5z" stroke-width="2"/><path d="M18.500 12v9H11" stroke-width="2" stroke-dasharray="2 3"/></svg></round-button>
  </div>
  <div class="right">
    <round-button label="Dibujar"><svg width="24" height="24" viewBox="0 0 24 24"><path d="M13 2.500H1.500v20H21V12"/><path d="M8.500 16v-4L19 1.500 22.500 5 12 15.500z" stroke-width="2"/></svg></round-button>
    <round-button label="Capas"><svg width="24" height="24" viewBox="0 0 24 24"><path d="M7 8H1.500v14.500H16V17"/><path d="M7.500 1.500h15V16h-15z"/></svg></round-button>
    <round-button label="Añadir"><svg width="24" height="24" viewBox="0 0 24 24"><circle cx="12" cy="12" r="10.500"/><path d="M12 6.500v11M6.500 12h11"/></svg></round-button>
  </div>
</div>`);
</script>
</body>
</html>
